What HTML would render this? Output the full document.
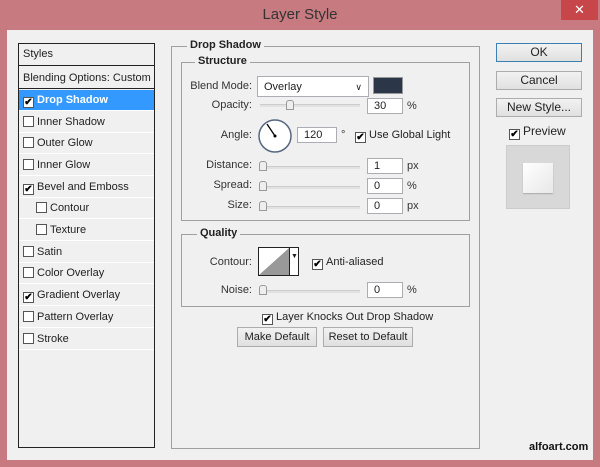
<!DOCTYPE html>
<html><head><meta charset="utf-8"><style>
*{box-sizing:border-box;margin:0;padding:0}
body{width:600px;height:467px;background:#c77a80;position:relative;overflow:hidden;font-family:"Liberation Sans",sans-serif;font-size:11px;color:#222}
.a{position:absolute}
.body{left:7px;top:30px;width:586px;height:430px;background:#f0f0f0}
.title{left:0;top:6px;width:600px;text-align:center;font-size:15px;color:#333}
.close{left:561px;top:0;width:37px;height:20px;background:#c7464a;color:#fff;text-align:center;font-size:13px;line-height:20px}
.list{left:18px;top:43px;width:137px;height:405px;border:1px solid #222;background:#f0f0f0}
.row{position:absolute;left:0;width:135px;height:21px;line-height:21px;border-bottom:1px solid #fff;padding-left:4px;white-space:nowrap}
.cb{display:inline-block;width:11px;height:11px;border:1px solid #555;background:#fff;vertical-align:-2px;margin-right:3px;position:relative;font-size:10px;line-height:10px;text-align:center;font-weight:bold;color:#000}
.grp{border:1px solid #a0a0a0}
.lg{background:#f0f0f0;padding:0 3px;font-weight:bold;font-size:11px}
.lbl{text-align:right;width:90px;color:#333}
.inp{background:#fff;border:1px solid #abadb3;height:16px;line-height:14px;padding-left:6px}
.u{line-height:16px;color:#333}
.sl{height:3px;background:#e2e2e2;border-top:1px solid #ccc}
.th{width:8px;height:10px;border:1px solid #999;border-radius:3px 3px 0 0;background:#eee}
.btn{background:linear-gradient(#f2f2f2,#e0e0e0);border:1px solid #acacac;text-align:center;line-height:16px;font-size:12px}
</style></head><body>
<div class="a title">Layer Style</div>
<div class="a close">✕</div>
<div class="a body"></div>

<div class="a list">
 <div class="row" style="top:0;height:22px;border-bottom:1px solid #222;line-height:21px">Styles</div>
 <div class="row" style="top:23px;height:22px;border-bottom:1px solid #222;line-height:22px">Blending Options: Custom</div>
 <div class="row" style="top:46px;background:#3399ff;color:#fff;font-weight:bold"><span class="cb">✔</span>Drop Shadow</div>
 <div class="row" style="top:68px"><span class="cb"></span>Inner Shadow</div>
 <div class="row" style="top:89px"><span class="cb"></span>Outer Glow</div>
 <div class="row" style="top:111px"><span class="cb"></span>Inner Glow</div>
 <div class="row" style="top:133px"><span class="cb">✔</span>Bevel and Emboss</div>
 <div class="row" style="top:154px;padding-left:17px"><span class="cb"></span>Contour</div>
 <div class="row" style="top:176px;padding-left:17px"><span class="cb"></span>Texture</div>
 <div class="row" style="top:198px"><span class="cb"></span>Satin</div>
 <div class="row" style="top:219px"><span class="cb"></span>Color Overlay</div>
 <div class="row" style="top:241px"><span class="cb">✔</span>Gradient Overlay</div>
 <div class="row" style="top:263px"><span class="cb"></span>Pattern Overlay</div>
 <div class="row" style="top:285px"><span class="cb"></span>Stroke</div>
</div>

<div class="a grp" style="left:171px;top:46px;width:309px;height:403px"></div>
<div class="a lg" style="left:187px;top:39px">Drop Shadow</div>
<div class="a grp" style="left:181px;top:62px;width:289px;height:159px"></div>
<div class="a lg" style="left:195px;top:55px">Structure</div>

<div class="a lbl" style="left:162px;top:80px">Blend Mode:</div>
<div class="a inp" style="left:257px;top:76px;width:112px;height:21px;line-height:20px;font-size:11px">Overlay<span style="position:absolute;right:6px;top:0;font-size:9px">∨</span></div>
<div class="a" style="left:373px;top:77px;width:30px;height:17px;background:#2b3748;border:1px solid #999"></div>

<div class="a lbl" style="left:162px;top:99px">Opacity:</div>
<div class="a sl" style="left:260px;top:104px;width:100px"></div>
<div class="a th" style="left:286px;top:100px"></div>
<div class="a inp" style="left:367px;top:98px;width:36px">30</div>
<div class="a u" style="left:407px;top:98px">%</div>

<div class="a lbl" style="left:162px;top:129px">Angle:</div>
<svg class="a" style="left:257px;top:118px" width="36" height="36"><circle cx="18" cy="18" r="16" fill="#fff" stroke="#56677f" stroke-width="1.5"/><line x1="18" y1="18" x2="10" y2="6" stroke="#000" stroke-width="1.3"/><circle cx="18" cy="18" r="1.5"/></svg>
<div class="a inp" style="left:297px;top:127px;width:40px">120</div>
<div class="a u" style="left:341px;top:127px">°</div>
<div class="a" style="left:355px;top:129px"><span class="cb">✔</span>Use Global Light</div>

<div class="a lbl" style="left:162px;top:159px">Distance:</div>
<div class="a sl" style="left:260px;top:166px;width:100px"></div>
<div class="a th" style="left:259px;top:161px"></div>
<div class="a inp" style="left:367px;top:158px;width:36px">1</div>
<div class="a u" style="left:407px;top:158px">px</div>

<div class="a lbl" style="left:162px;top:179px">Spread:</div>
<div class="a sl" style="left:260px;top:186px;width:100px"></div>
<div class="a th" style="left:259px;top:181px"></div>
<div class="a inp" style="left:367px;top:178px;width:36px">0</div>
<div class="a u" style="left:407px;top:178px">%</div>

<div class="a lbl" style="left:162px;top:199px">Size:</div>
<div class="a sl" style="left:260px;top:206px;width:100px"></div>
<div class="a th" style="left:259px;top:201px"></div>
<div class="a inp" style="left:367px;top:198px;width:36px">0</div>
<div class="a u" style="left:407px;top:198px">px</div>

<div class="a grp" style="left:181px;top:234px;width:289px;height:73px"></div>
<div class="a lg" style="left:197px;top:227px">Quality</div>
<div class="a lbl" style="left:162px;top:256px">Contour:</div>
<div class="a" style="left:258px;top:247px;width:41px;height:29px;border:1px solid #222;background:#fff;overflow:hidden">
 <svg width="30" height="27" style="position:absolute;left:0;top:0"><polygon points="0,27 30,0 30,27" fill="#999"/></svg>
 <div style="position:absolute;left:30px;top:0;width:10px;height:27px;border-left:1px solid #222;font-size:7px;text-align:center;line-height:18px">▼</div>
</div>
<div class="a" style="left:312px;top:256px"><span class="cb">✔</span>Anti-aliased</div>
<div class="a lbl" style="left:162px;top:284px">Noise:</div>
<div class="a sl" style="left:260px;top:290px;width:100px"></div>
<div class="a th" style="left:259px;top:285px"></div>
<div class="a inp" style="left:367px;top:282px;width:36px">0</div>
<div class="a u" style="left:407px;top:282px">%</div>

<div class="a" style="left:262px;top:311px"><span class="cb">✔</span>Layer Knocks Out Drop Shadow</div>
<div class="a btn" style="left:237px;top:327px;width:80px;height:20px;line-height:18px;font-size:11px">Make Default</div>
<div class="a btn" style="left:323px;top:327px;width:90px;height:20px;line-height:18px;font-size:11px">Reset to Default</div>

<div class="a btn" style="left:496px;top:43px;width:86px;height:19px;border-color:#3c7fb1">OK</div>
<div class="a btn" style="left:496px;top:71px;width:86px;height:19px">Cancel</div>
<div class="a btn" style="left:496px;top:98px;width:86px;height:19px">New Style...</div>
<div class="a" style="left:509px;top:124px;font-size:12px"><span class="cb">✔</span>Preview</div>
<div class="a" style="left:506px;top:145px;width:64px;height:64px;background:#d8d8d8;border:1px solid #ccc"></div>
<div class="a" style="left:523px;top:163px;width:30px;height:30px;background:linear-gradient(135deg,#fff,#e8e8e8);box-shadow:0 1px 1px #aaa"></div>

<div class="a" style="left:529px;top:441px;font-weight:bold;font-size:11px;color:#111">alfoart.com</div>
</body></html>
